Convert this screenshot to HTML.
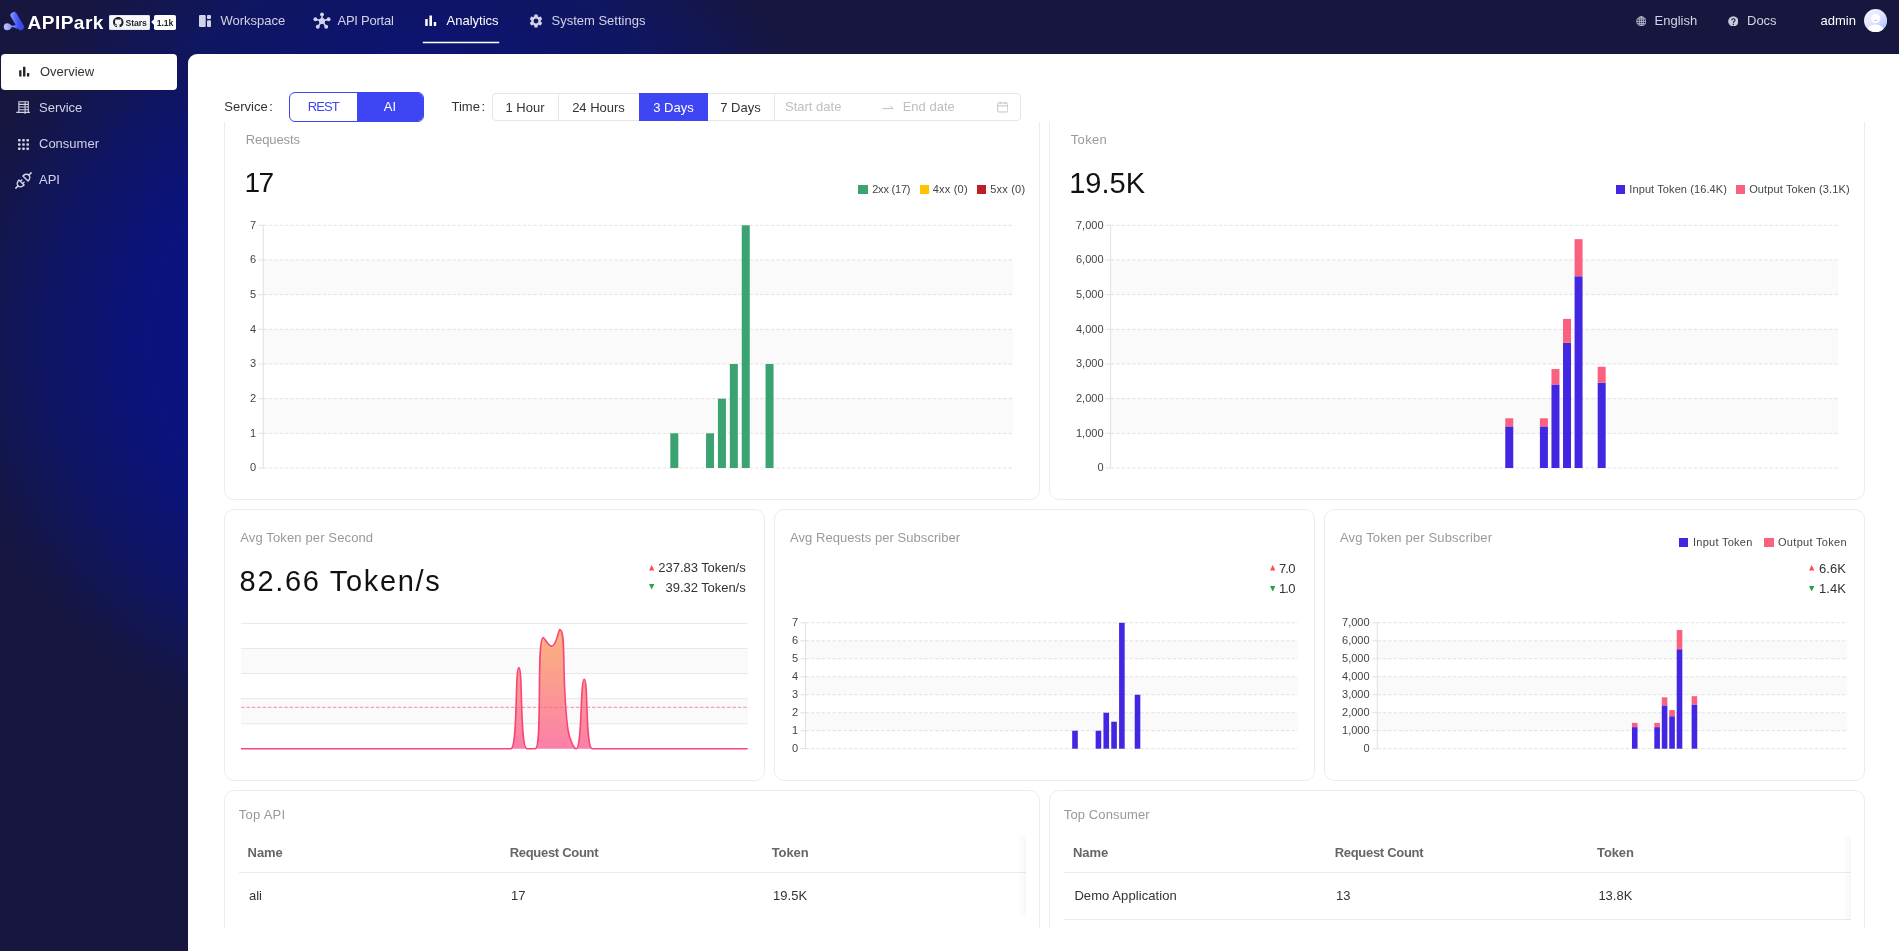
<!DOCTYPE html>
<html lang="en"><head><meta charset="utf-8"><title>APIPark - Analytics Overview</title>
<style>
*{box-sizing:border-box;margin:0;padding:0}
html,body{width:1899px;height:951px;overflow:hidden}
body{position:relative;font-family:"Liberation Sans", sans-serif;background:#17163f;
background-image:radial-gradient(520px 436px at 460px 340px,#0a1088 0,#0a1283 50%,#0b137a 63%,#0d146e 71%,#0f1562 80%,#121652 89%,#151645 96%,#17163f 102%);}
.abs,.t,.card{position:absolute}
.t{line-height:20px;white-space:nowrap}
.hdr{position:absolute;left:0;top:0;width:1899px;height:54px;will-change:transform;background:#17163f radial-gradient(circle 450px at 420px 300px,#0a1088 0,#0c1378 50%,#0d1470 56%,#0e1567 66%,#101660 76%,#121655 84%,#14164a 92%,#17163f 100%)}
.side{position:absolute;left:0;top:0;width:188px;height:951px;will-change:transform}
.main{position:absolute;left:0;top:0;width:1899px;height:951px;will-change:transform}
.main::before{content:"";position:absolute;left:188px;top:54px;width:1711px;height:897px;background:#fff;border-top-left-radius:9px}
.badge{background:linear-gradient(#fafbfc,#eff1f3);border-radius:1.8px;box-shadow:inset 0 0 0 .5px #d1d5da}
.bubble{background:#fff;border-radius:1.8px}
.seg{border:1px solid #3d46f2;border-radius:6px;overflow:hidden;background:#fff}
.segon{position:absolute;left:66.5px;top:0;right:0;bottom:0;background:#3d46f2}
.tg{border:1px solid #e6e6e6;border-radius:4px;background:#fff}
.clip{position:absolute;left:0;top:0;width:1899px;height:951px;clip-path:inset(122px 0 23.5px 188px)}
.card{border:1px solid #ececec;border-radius:10px;background:#fff}
</style></head>
<body>
<header class="hdr">
<svg class="abs" style="left:2px;top:10px" width="24" height="22" viewBox="0 0 24 22">
<defs><linearGradient id="lg1" gradientUnits="userSpaceOnUse" x1="2" y1="0" x2="22" y2="0"><stop offset="0" stop-color="#c3c5ff"/><stop offset="0.3" stop-color="#929dff"/><stop offset="0.52" stop-color="#6073fb"/><stop offset="0.75" stop-color="#3f4df2"/><stop offset="1" stop-color="#3540ee"/></linearGradient></defs>
<circle cx="5.3" cy="16.7" r="3.5" fill="url(#lg1)"/>
<path d="M7.6 14.2 C9.4 15 9.8 16 11.4 15.6 L14.5 14.6 L15.5 19 C12.8 18 10.8 16.6 9.6 17.6 C9 18.2 8.4 18.8 7.6 19.3 Z" fill="url(#lg1)"/>
<path d="M11.8 5.3 L18.7 16.9" stroke="url(#lg1)" stroke-width="6.6" stroke-linecap="round"/>
</svg>
<div class="t" style="top:13.12px;font-size:19px;color:#fff;font-weight:700;letter-spacing:0.5px;left:27.5px;">APIPark</div>
<div class="abs badge" style="left:109px;top:15px;width:41px;height:15px"></div>
<svg class="abs" style="left:113px;top:17px" width="10.5" height="10.5" viewBox="0 0 16 16"><path fill="#1b1f23" d="M8 0C3.58 0 0 3.58 0 8c0 3.54 2.29 6.53 5.47 7.59.4.07.55-.17.55-.38 0-.19-.01-.82-.01-1.49-2.01.37-2.53-.49-2.69-.94-.09-.23-.48-.94-.82-1.13-.28-.15-.68-.52-.01-.53.63-.01 1.08.58 1.23.82.72 1.21 1.87.87 2.33.66.07-.52.28-.87.51-1.07-1.78-.2-3.64-.89-3.64-3.95 0-.87.31-1.59.82-2.15-.08-.2-.36-1.02.08-2.12 0 0 .67-.21 2.2.82.64-.18 1.32-.27 2-.27.68 0 1.36.09 2 .27 1.53-1.04 2.2-.82 2.2-.82.44 1.1.16 1.92.08 2.12.51.56.82 1.27.82 2.15 0 3.07-1.87 3.75-3.65 3.95.29.25.54.73.54 1.48 0 1.07-.01 1.93-.01 2.2 0 .21.15.46.55.38A8.013 8.013 0 0016 8c0-4.42-3.58-8-8-8z"/></svg>
<div class="t" style="top:13.19px;font-size:8.7px;color:#24292e;font-weight:700;letter-spacing:-0.15px;left:125.6px;">Stars</div>
<div class="abs bubble" style="left:154px;top:15px;width:22px;height:15px"></div>
<div class="abs" style="left:152.2px;top:20.2px;width:4px;height:4px;background:#fff;transform:rotate(45deg)"></div>
<div class="t" style="top:13.19px;font-size:8.7px;color:#24292e;font-weight:700;letter-spacing:-0.1px;left:-35px;width:400px;text-align:center;">1.1k</div>
<svg class="abs" style="left:199px;top:15px" width="12" height="12" viewBox="0 0 12 12" fill="#d2d3e6">
<rect x="0" y="0" width="6.7" height="12" rx="1"/><rect x="8" y="0" width="4" height="4" rx=".9"/><rect x="8" y="5.3" width="4" height="6.7" rx=".9"/></svg>
<div class="t" style="top:10.50px;font-size:13px;color:#d2d3e6;left:220.5px;">Workspace</div>
<svg class="abs" style="left:313px;top:12px" width="18" height="18" viewBox="0 0 18 18" fill="#d2d3e6" stroke="#d2d3e6">
<g stroke-width="1.6"><line x1="9" y1="9" x2="9" y2="2.4"/><line x1="9" y1="9" x2="15.6" y2="7.2"/><line x1="9" y1="9" x2="13.2" y2="14.8"/><line x1="9" y1="9" x2="4.8" y2="14.8"/><line x1="9" y1="9" x2="2.4" y2="7.2"/></g>
<g stroke="none"><circle cx="9" cy="9" r="3.1"/><circle cx="9" cy="2.4" r="1.95"/><circle cx="15.6" cy="7.2" r="1.95"/><circle cx="13.2" cy="14.8" r="1.95"/><circle cx="4.8" cy="14.8" r="1.95"/><circle cx="2.4" cy="7.2" r="1.95"/></g></svg>
<div class="t" style="top:10.50px;font-size:13px;color:#d2d3e6;letter-spacing:-0.25px;left:337.5px;">API Portal</div>
<svg class="abs" style="left:425px;top:15px" width="12" height="11" viewBox="0 0 12 11" fill="#fff">
<rect x="0.2" y="4" width="2.5" height="7" rx=".4"/><rect x="4.4" y="0.4" width="2.6" height="10.6" rx=".4"/><rect x="8.7" y="7" width="2.5" height="4" rx=".4"/></svg>
<div class="t" style="top:10.50px;font-size:13px;color:#fff;left:446.5px;">Analytics</div>
<svg class="abs" style="left:420px;top:38px" width="84" height="8" viewBox="0 0 84 8"><line x1="2.8" y1="4.5" x2="79.2" y2="4.5" stroke="#fff" stroke-width="1.5"/></svg>
<svg class="abs" style="left:527.6px;top:12.6px" width="16" height="16" viewBox="0 0 24 24"><path fill="#d2d3e6" d="M19.14,12.94c0.04-0.3,0.06-0.61,0.06-0.94c0-0.32-0.02-0.64-0.07-0.94l2.03-1.58c0.18-0.14,0.23-0.41,0.12-0.61 l-1.92-3.32c-0.12-0.22-0.37-0.29-0.59-0.22l-2.39,0.96c-0.5-0.38-1.03-0.7-1.62-0.94L14.4,2.81c-0.04-0.24-0.24-0.41-0.48-0.41 h-3.84c-0.24,0-0.43,0.17-0.47,0.41L9.25,5.35C8.66,5.59,8.12,5.92,7.63,6.29L5.24,5.33c-0.22-0.08-0.47,0-0.59,0.22L2.74,8.87 C2.62,9.08,2.66,9.34,2.86,9.48l2.03,1.58C4.84,11.36,4.8,11.69,4.8,12s0.02,0.64,0.07,0.94l-2.03,1.58 c-0.18,0.14-0.23,0.41-0.12,0.61l1.92,3.32c0.12,0.22,0.37,0.29,0.59,0.22l2.39-0.96c0.5,0.38,1.03,0.7,1.62,0.94l0.36,2.54 c0.05,0.24,0.24,0.41,0.48,0.41h3.84c0.24,0,0.44-0.17,0.47-0.41l0.36-2.54c0.59-0.24,1.13-0.56,1.62-0.94l2.39,0.96 c0.22,0.08,0.47,0,0.59-0.22l1.92-3.32c0.12-0.22,0.07-0.47-0.12-0.61L19.14,12.94z M12,15.6c-1.98,0-3.6-1.62-3.6-3.6 s1.62-3.6,3.6-3.6s3.6,1.62,3.6,3.6S13.98,15.6,12,15.6z"/></svg>
<div class="t" style="top:10.50px;font-size:13px;color:#d2d3e6;left:551.5px;">System Settings</div>
<svg class="abs" style="left:1635.8px;top:15.8px" width="10.7" height="10.7" viewBox="0 0 12 12" fill="none" stroke="#bfc0d2" stroke-width="1">
<circle cx="6" cy="6" r="5.2"/><ellipse cx="6" cy="6" rx="2.3" ry="5.2"/><line x1="0.8" y1="6" x2="11.2" y2="6"/><line x1="6" y1="0.8" x2="6" y2="11.2"/><path d="M1.6 3.4 H10.4 M1.6 8.6 H10.4"/></svg>
<div class="t" style="top:10.50px;font-size:13px;color:#d2d3e6;left:1654.5px;">English</div>
<svg class="abs" style="left:1727.6px;top:15.8px" width="10.7" height="10.7" viewBox="0 0 12 12">
<circle cx="6" cy="6" r="5.8" fill="#c9cadb"/><path d="M4.2 4.7 C4.2 2.6 7.9 2.6 7.9 4.7 C7.9 6 6 6 6 7.5" fill="none" stroke="#17163f" stroke-width="1.25"/><circle cx="6" cy="9.3" r="0.8" fill="#17163f"/></svg>
<div class="t" style="top:10.50px;font-size:13px;color:#d2d3e6;left:1747px;">Docs</div>
<div class="t" style="top:10.50px;font-size:13px;color:#fff;left:1820.5px;">admin</div>
<svg class="abs" style="left:1863.9px;top:8.8px" width="23.2" height="23.2" viewBox="0 0 23 23">
<defs><linearGradient id="av" x1="0.15" y1="0.1" x2="0.85" y2="0.95"><stop offset="0" stop-color="#f6f2ff"/><stop offset="0.45" stop-color="#e4e3ff"/><stop offset="1" stop-color="#a9c2ff"/></linearGradient><clipPath id="avc"><circle cx="11.5" cy="11.5" r="11.5"/></clipPath></defs>
<circle cx="11.5" cy="11.5" r="11.5" fill="url(#av)"/>
<g clip-path="url(#avc)" fill="#fff"><circle cx="11.55" cy="9.4" r="4.55"/><ellipse cx="11.5" cy="22.6" rx="8.9" ry="7.2"/></g>
<rect x="10.2" y="11.1" width="2.8" height="0.85" rx="0.4" fill="#8fa4ff"/></svg>
</header>
<nav class="side">
<div class="abs" style="left:1px;top:54px;width:176px;height:36px;background:#fff;border-radius:4px"></div>
<svg class="abs" style="left:18.5px;top:66px" width="11" height="11" viewBox="0 0 12 11" fill="#222">
<rect x="0.2" y="4" width="2.5" height="7" rx=".3"/><rect x="4.4" y="0.2" width="2.6" height="10.8" rx=".3"/><rect x="8.7" y="7" width="2.5" height="4" rx=".3"/></svg>
<div class="t" style="top:62.00px;font-size:13px;color:#333;left:40px;">Overview</div>
<svg class="abs" style="left:15.8px;top:101.2px" width="14.2" height="14.2" viewBox="0 0 15 15" fill="none" stroke="#d2d3e6" stroke-width="1.15">
<path d="M3 0.8 H13 V12 H3 Z M3 3.6 H13 M3 6.4 H13 M3 9.2 H13 M9.6 0.8 V13.8 M0.3 12 H14.7"/></svg>
<div class="t" style="top:97.80px;font-size:13px;color:#d2d3e6;left:39px;">Service</div>
<svg class="abs" style="left:17.5px;top:138.5px" width="11" height="11" viewBox="0 0 11 11" fill="#d2d3e6"><rect x="0.0" y="0.0" width="2.6" height="2.6" rx=".8"/><rect x="4.2" y="0.0" width="2.6" height="2.6" rx=".8"/><rect x="8.4" y="0.0" width="2.6" height="2.6" rx=".8"/><rect x="0.0" y="4.2" width="2.6" height="2.6" rx=".8"/><rect x="4.2" y="4.2" width="2.6" height="2.6" rx=".8"/><rect x="8.4" y="4.2" width="2.6" height="2.6" rx=".8"/><rect x="0.0" y="8.4" width="2.6" height="2.6" rx=".8"/><rect x="4.2" y="8.4" width="2.6" height="2.6" rx=".8"/><rect x="8.4" y="8.4" width="2.6" height="2.6" rx=".8"/></svg>
<div class="t" style="top:133.90px;font-size:13px;color:#d2d3e6;left:39px;">Consumer</div>
<svg class="abs" style="left:14.5px;top:171.5px" width="17" height="17" viewBox="0 0 17 17" fill="none" stroke="#d2d3e6" stroke-width="1.45" stroke-linecap="round" stroke-linejoin="round">
<g transform="translate(8.5 8.5) rotate(-45)"><path d="M-10.8 0 H-7.6 M-2.8 -3.6 A4.8 3.6 0 0 0 -2.8 3.6 Z M-2.8 -1.6 H-0.8 M-2.8 1.6 H-0.8 M2.8 -3.6 A4.8 3.6 0 0 1 2.8 3.6 Z M7.6 0 H10.8"/></g></svg>
<div class="t" style="top:169.90px;font-size:13px;color:#d2d3e6;left:39px;">API</div>
</nav>
<main class="main">
<div class="t" style="top:96.50px;font-size:13px;color:#333;left:224.3px;">Service<span style="margin-left:1.5px">:</span></div>
<div class="abs seg" style="left:289px;top:92px;width:135px;height:30px"><div class="segon"></div></div>
<div class="t" style="top:97.20px;font-size:13px;color:#3d46f2;letter-spacing:-0.9px;left:123.30000000000001px;width:400px;text-align:center;">REST</div>
<div class="t" style="top:97.20px;font-size:13px;color:#fff;left:190px;width:400px;text-align:center;">AI</div>
<div class="t" style="top:96.50px;font-size:13px;color:#333;left:451.5px;">Time<span style="margin-left:1.5px">:</span></div>
<div class="abs tg" style="left:492px;top:93px;width:529px;height:28px"></div>
<div class="abs" style="left:558px;top:94px;width:1px;height:26px;background:#e6e6e6"></div>
<div class="abs" style="left:774px;top:94px;width:1px;height:26px;background:#e6e6e6"></div>
<div class="abs" style="left:639px;top:93px;width:69px;height:28px;background:#3d46f2"></div>
<div class="t" style="top:97.50px;font-size:13px;color:#333;left:325px;width:400px;text-align:center;">1 Hour</div>
<div class="t" style="top:97.50px;font-size:13px;color:#333;left:398.5px;width:400px;text-align:center;">24 Hours</div>
<div class="t" style="top:97.50px;font-size:13px;color:#fff;left:473.5px;width:400px;text-align:center;">3 Days</div>
<div class="t" style="top:97.50px;font-size:13px;color:#333;left:540.5px;width:400px;text-align:center;">7 Days</div>
<div class="t" style="top:96.50px;font-size:13px;color:#bfbfbf;left:785px;">Start date</div>
<div class="t" style="top:96.50px;font-size:13px;color:#bfbfbf;left:902.7px;">End date</div>
<svg class="abs" style="left:882px;top:103px" width="12" height="8" viewBox="0 0 12 8" fill="none" stroke="#bfbfbf" stroke-width="1"><path d="M0.6 5.6 H11 L8 2.6"/></svg>
<svg class="abs" style="left:996.5px;top:101px" width="11.5" height="12" viewBox="0 0 12 12" fill="none" stroke="#bfbfbf" stroke-width="1"><rect x="0.7" y="1.8" width="10.6" height="9.4" rx="1"/><path d="M0.7 4.8 H11.3 M3.4 0.4 V3 M8.6 0.4 V3"/></svg>
<div class="clip">
<div class="card" style="left:224px;top:100px;width:816px;height:400px"></div>
<div class="card" style="left:1049px;top:100px;width:816px;height:400px"></div>
<div class="card" style="left:224px;top:509px;width:541px;height:272px"></div>
<div class="card" style="left:774px;top:509px;width:541px;height:272px"></div>
<div class="card" style="left:1324px;top:509px;width:541px;height:272px"></div>
<div class="card" style="left:224px;top:790px;width:816px;height:300px"></div>
<div class="card" style="left:1049px;top:790px;width:816px;height:300px"></div>
<div class="t" style="top:129.50px;font-size:13px;color:#999;letter-spacing:-0.1px;left:245.8px;">Requests</div>
<div class="t" style="top:172.90px;font-size:28px;color:#111;letter-spacing:-1.6px;left:244.6px;">17</div>
<div class="t" style="top:129.50px;font-size:13px;color:#999;letter-spacing:0.3px;left:1070.8px;">Token</div>
<div class="t" style="top:172.75px;font-size:29px;color:#111;left:1069.2px;">19.5K</div>
<div class="abs" style="left:858.4px;top:185.2px;width:9.2px;height:9.2px;background:#3ba272"></div>
<div class="t" style="top:178.89px;font-size:11px;color:#444;letter-spacing:-0.2px;left:872.2px;">2xx (17)</div>
<div class="abs" style="left:919.5px;top:185.2px;width:9.2px;height:9.2px;background:#ffc300"></div>
<div class="t" style="top:178.89px;font-size:11px;color:#444;letter-spacing:0.22px;left:932.7px;">4xx (0)</div>
<div class="abs" style="left:976.8px;top:185.2px;width:9.2px;height:9.2px;background:#bb2124"></div>
<div class="t" style="top:178.89px;font-size:11px;color:#444;letter-spacing:0.22px;left:990.2px;">5xx (0)</div>
<div class="abs" style="left:1615.8px;top:185.2px;width:9.2px;height:9.2px;background:#4127e1"></div>
<div class="t" style="top:178.89px;font-size:11px;color:#444;letter-spacing:0.1px;left:1629.3px;">Input Token (16.4K)</div>
<div class="abs" style="left:1735.6px;top:185.2px;width:9.2px;height:9.2px;background:#fa617f"></div>
<div class="t" style="top:178.89px;font-size:11px;color:#444;letter-spacing:0.12px;left:1749.2px;">Output Token (3.1K)</div>
<div class="t" style="top:527.50px;font-size:13px;color:#999;letter-spacing:0.13px;left:240.3px;">Avg Token per Second</div>
<div class="t" style="top:570.95px;font-size:29px;color:#111;letter-spacing:1.68px;left:239.6px;">82.66 Token/s</div>
<div class="t" style="top:527.50px;font-size:13px;color:#999;letter-spacing:0.05px;left:790px;">Avg Requests per Subscriber</div>
<div class="t" style="top:527.50px;font-size:13px;color:#999;letter-spacing:0.16px;left:1340px;">Avg Token per Subscriber</div>
<svg class="abs" style="left:648.7px;top:565.4px" width="5.4" height="5.6" viewBox="0 0 54 56"><path d="M27 0 L54 56 H0 Z" fill="#ff4d4f"/></svg>
<div class="t" style="top:557.50px;font-size:13px;color:#333;letter-spacing:-0.05px;right:1153.4px;">237.83 Token/s</div>
<svg class="abs" style="left:648.7px;top:584.3px" width="5.4" height="5.6" viewBox="0 0 54 56"><path d="M0 0 H54 L27 56 Z" fill="#22a93c"/></svg>
<div class="t" style="top:577.50px;font-size:13px;color:#333;letter-spacing:-0.05px;right:1153.4px;">39.32 Token/s</div>
<svg class="abs" style="left:1269.6px;top:565.4px" width="5.4" height="5.6" viewBox="0 0 54 56"><path d="M27 0 L54 56 H0 Z" fill="#ff4d4f"/></svg>
<div class="t" style="top:558.70px;font-size:13px;color:#333;letter-spacing:-0.8px;right:604.4000000000001px;">7.0</div>
<svg class="abs" style="left:1269.6px;top:585.6px" width="5.4" height="5.6" viewBox="0 0 54 56"><path d="M0 0 H54 L27 56 Z" fill="#22a93c"/></svg>
<div class="t" style="top:578.70px;font-size:13px;color:#333;letter-spacing:-0.8px;right:604.4000000000001px;">1.0</div>
<svg class="abs" style="left:1809.4px;top:565.4px" width="5.4" height="5.6" viewBox="0 0 54 56"><path d="M27 0 L54 56 H0 Z" fill="#ff4d4f"/></svg>
<div class="t" style="top:558.70px;font-size:13px;color:#333;right:53.200000000000045px;">6.6K</div>
<svg class="abs" style="left:1809.4px;top:585.6px" width="5.4" height="5.6" viewBox="0 0 54 56"><path d="M0 0 H54 L27 56 Z" fill="#22a93c"/></svg>
<div class="t" style="top:578.70px;font-size:13px;color:#333;right:53.200000000000045px;">1.4K</div>
<div class="abs" style="left:1679px;top:538px;width:9.3px;height:9.3px;background:#4127e1"></div>
<div class="t" style="top:531.99px;font-size:11px;color:#444;letter-spacing:0.27px;left:1693px;">Input Token</div>
<div class="abs" style="left:1764.4px;top:538px;width:9.3px;height:9.3px;background:#fa617f"></div>
<div class="t" style="top:531.99px;font-size:11px;color:#444;letter-spacing:0.3px;left:1778px;">Output Token</div>
<svg class="abs" style="left:0;top:0" width="1899" height="951" viewBox="0 0 1899 951" font-family='"Liberation Sans", sans-serif'><rect x="263.3" y="398.66" width="750" height="34.67" fill="#fafafa"/>
<rect x="263.3" y="329.31" width="750" height="34.67" fill="#fafafa"/>
<rect x="263.3" y="259.97" width="750" height="34.67" fill="#fafafa"/>
<line x1="263.3" y1="468" x2="1013.3" y2="468" stroke="#e3e3e3" stroke-width="1" stroke-dasharray="3.6 1.8"/>
<line x1="258.5" y1="468" x2="263.3" y2="468" stroke="#e0e0e0" stroke-width="1"/>
<text x="256" y="471.4" text-anchor="end" font-size="11" fill="#444">0</text>
<line x1="263.3" y1="433.33" x2="1013.3" y2="433.33" stroke="#e3e3e3" stroke-width="1" stroke-dasharray="3.6 1.8"/>
<line x1="258.5" y1="433.33" x2="263.3" y2="433.33" stroke="#e0e0e0" stroke-width="1"/>
<text x="256" y="436.73" text-anchor="end" font-size="11" fill="#444">1</text>
<line x1="263.3" y1="398.66" x2="1013.3" y2="398.66" stroke="#e3e3e3" stroke-width="1" stroke-dasharray="3.6 1.8"/>
<line x1="258.5" y1="398.66" x2="263.3" y2="398.66" stroke="#e0e0e0" stroke-width="1"/>
<text x="256" y="402.06" text-anchor="end" font-size="11" fill="#444">2</text>
<line x1="263.3" y1="363.99" x2="1013.3" y2="363.99" stroke="#e3e3e3" stroke-width="1" stroke-dasharray="3.6 1.8"/>
<line x1="258.5" y1="363.99" x2="263.3" y2="363.99" stroke="#e0e0e0" stroke-width="1"/>
<text x="256" y="367.39" text-anchor="end" font-size="11" fill="#444">3</text>
<line x1="263.3" y1="329.31" x2="1013.3" y2="329.31" stroke="#e3e3e3" stroke-width="1" stroke-dasharray="3.6 1.8"/>
<line x1="258.5" y1="329.31" x2="263.3" y2="329.31" stroke="#e0e0e0" stroke-width="1"/>
<text x="256" y="332.71" text-anchor="end" font-size="11" fill="#444">4</text>
<line x1="263.3" y1="294.64" x2="1013.3" y2="294.64" stroke="#e3e3e3" stroke-width="1" stroke-dasharray="3.6 1.8"/>
<line x1="258.5" y1="294.64" x2="263.3" y2="294.64" stroke="#e0e0e0" stroke-width="1"/>
<text x="256" y="298.04" text-anchor="end" font-size="11" fill="#444">5</text>
<line x1="263.3" y1="259.97" x2="1013.3" y2="259.97" stroke="#e3e3e3" stroke-width="1" stroke-dasharray="3.6 1.8"/>
<line x1="258.5" y1="259.97" x2="263.3" y2="259.97" stroke="#e0e0e0" stroke-width="1"/>
<text x="256" y="263.37" text-anchor="end" font-size="11" fill="#444">6</text>
<line x1="263.3" y1="225.3" x2="1013.3" y2="225.3" stroke="#e3e3e3" stroke-width="1" stroke-dasharray="3.6 1.8"/>
<line x1="258.5" y1="225.3" x2="263.3" y2="225.3" stroke="#e0e0e0" stroke-width="1"/>
<text x="256" y="228.7" text-anchor="end" font-size="11" fill="#444">7</text>
<line x1="263.3" y1="225.3" x2="263.3" y2="468" stroke="#e0e0e0" stroke-width="1"/>
<rect x="670.31" y="433.33" width="8" height="34.67" fill="#3ba272"/>
<rect x="706.03" y="433.33" width="8" height="34.67" fill="#3ba272"/>
<rect x="717.93" y="398.66" width="8" height="69.34" fill="#3ba272"/>
<rect x="729.84" y="363.99" width="8" height="104.01" fill="#3ba272"/>
<rect x="741.74" y="225.3" width="8" height="242.7" fill="#3ba272"/>
<rect x="765.55" y="363.99" width="8" height="104.01" fill="#3ba272"/>
<rect x="1110.6" y="398.66" width="727.8" height="34.67" fill="#fafafa"/>
<rect x="1110.6" y="329.31" width="727.8" height="34.67" fill="#fafafa"/>
<rect x="1110.6" y="259.97" width="727.8" height="34.67" fill="#fafafa"/>
<line x1="1110.6" y1="468" x2="1838.4" y2="468" stroke="#e3e3e3" stroke-width="1" stroke-dasharray="3.6 1.8"/>
<line x1="1105.6" y1="468" x2="1110.6" y2="468" stroke="#e0e0e0" stroke-width="1"/>
<text x="1103.5" y="471.4" text-anchor="end" font-size="11" fill="#444">0</text>
<line x1="1110.6" y1="433.33" x2="1838.4" y2="433.33" stroke="#e3e3e3" stroke-width="1" stroke-dasharray="3.6 1.8"/>
<line x1="1105.6" y1="433.33" x2="1110.6" y2="433.33" stroke="#e0e0e0" stroke-width="1"/>
<text x="1103.5" y="436.73" text-anchor="end" font-size="11" fill="#444">1,000</text>
<line x1="1110.6" y1="398.66" x2="1838.4" y2="398.66" stroke="#e3e3e3" stroke-width="1" stroke-dasharray="3.6 1.8"/>
<line x1="1105.6" y1="398.66" x2="1110.6" y2="398.66" stroke="#e0e0e0" stroke-width="1"/>
<text x="1103.5" y="402.06" text-anchor="end" font-size="11" fill="#444">2,000</text>
<line x1="1110.6" y1="363.99" x2="1838.4" y2="363.99" stroke="#e3e3e3" stroke-width="1" stroke-dasharray="3.6 1.8"/>
<line x1="1105.6" y1="363.99" x2="1110.6" y2="363.99" stroke="#e0e0e0" stroke-width="1"/>
<text x="1103.5" y="367.39" text-anchor="end" font-size="11" fill="#444">3,000</text>
<line x1="1110.6" y1="329.31" x2="1838.4" y2="329.31" stroke="#e3e3e3" stroke-width="1" stroke-dasharray="3.6 1.8"/>
<line x1="1105.6" y1="329.31" x2="1110.6" y2="329.31" stroke="#e0e0e0" stroke-width="1"/>
<text x="1103.5" y="332.71" text-anchor="end" font-size="11" fill="#444">4,000</text>
<line x1="1110.6" y1="294.64" x2="1838.4" y2="294.64" stroke="#e3e3e3" stroke-width="1" stroke-dasharray="3.6 1.8"/>
<line x1="1105.6" y1="294.64" x2="1110.6" y2="294.64" stroke="#e0e0e0" stroke-width="1"/>
<text x="1103.5" y="298.04" text-anchor="end" font-size="11" fill="#444">5,000</text>
<line x1="1110.6" y1="259.97" x2="1838.4" y2="259.97" stroke="#e3e3e3" stroke-width="1" stroke-dasharray="3.6 1.8"/>
<line x1="1105.6" y1="259.97" x2="1110.6" y2="259.97" stroke="#e0e0e0" stroke-width="1"/>
<text x="1103.5" y="263.37" text-anchor="end" font-size="11" fill="#444">6,000</text>
<line x1="1110.6" y1="225.3" x2="1838.4" y2="225.3" stroke="#e3e3e3" stroke-width="1" stroke-dasharray="3.6 1.8"/>
<line x1="1105.6" y1="225.3" x2="1110.6" y2="225.3" stroke="#e0e0e0" stroke-width="1"/>
<text x="1103.5" y="228.7" text-anchor="end" font-size="11" fill="#444">7,000</text>
<line x1="1110.6" y1="225.3" x2="1110.6" y2="468" stroke="#e0e0e0" stroke-width="1"/>
<rect x="1505.26" y="426.39" width="8" height="41.61" fill="#4127e1"/>
<rect x="1539.91" y="426.39" width="8" height="41.61" fill="#4127e1"/>
<rect x="1551.47" y="384.44" width="8" height="83.56" fill="#4127e1"/>
<rect x="1563.02" y="342.84" width="8" height="125.16" fill="#4127e1"/>
<rect x="1574.57" y="276.27" width="8" height="191.73" fill="#4127e1"/>
<rect x="1597.68" y="382.71" width="8" height="85.29" fill="#4127e1"/>
<rect x="1505.26" y="418.28" width="8" height="8.11" fill="#fa617f"/>
<rect x="1539.91" y="418.28" width="8" height="8.11" fill="#fa617f"/>
<rect x="1551.47" y="369.01" width="8" height="15.43" fill="#fa617f"/>
<rect x="1563.02" y="318.91" width="8" height="23.92" fill="#fa617f"/>
<rect x="1574.57" y="239.17" width="8" height="37.1" fill="#fa617f"/>
<rect x="1597.68" y="366.76" width="8" height="15.95" fill="#fa617f"/>
<rect x="805.4" y="712.73" width="492.3" height="17.99" fill="#fafafa"/>
<rect x="805.4" y="676.76" width="492.3" height="17.99" fill="#fafafa"/>
<rect x="805.4" y="640.79" width="492.3" height="17.99" fill="#fafafa"/>
<line x1="805.4" y1="748.7" x2="1297.7" y2="748.7" stroke="#e3e3e3" stroke-width="1" stroke-dasharray="3.6 1.8"/>
<line x1="800.5" y1="748.7" x2="805.4" y2="748.7" stroke="#e0e0e0" stroke-width="1"/>
<text x="798" y="752.1" text-anchor="end" font-size="11" fill="#444">0</text>
<line x1="805.4" y1="730.71" x2="1297.7" y2="730.71" stroke="#e3e3e3" stroke-width="1" stroke-dasharray="3.6 1.8"/>
<line x1="800.5" y1="730.71" x2="805.4" y2="730.71" stroke="#e0e0e0" stroke-width="1"/>
<text x="798" y="734.11" text-anchor="end" font-size="11" fill="#444">1</text>
<line x1="805.4" y1="712.73" x2="1297.7" y2="712.73" stroke="#e3e3e3" stroke-width="1" stroke-dasharray="3.6 1.8"/>
<line x1="800.5" y1="712.73" x2="805.4" y2="712.73" stroke="#e0e0e0" stroke-width="1"/>
<text x="798" y="716.13" text-anchor="end" font-size="11" fill="#444">2</text>
<line x1="805.4" y1="694.74" x2="1297.7" y2="694.74" stroke="#e3e3e3" stroke-width="1" stroke-dasharray="3.6 1.8"/>
<line x1="800.5" y1="694.74" x2="805.4" y2="694.74" stroke="#e0e0e0" stroke-width="1"/>
<text x="798" y="698.14" text-anchor="end" font-size="11" fill="#444">3</text>
<line x1="805.4" y1="676.76" x2="1297.7" y2="676.76" stroke="#e3e3e3" stroke-width="1" stroke-dasharray="3.6 1.8"/>
<line x1="800.5" y1="676.76" x2="805.4" y2="676.76" stroke="#e0e0e0" stroke-width="1"/>
<text x="798" y="680.16" text-anchor="end" font-size="11" fill="#444">4</text>
<line x1="805.4" y1="658.77" x2="1297.7" y2="658.77" stroke="#e3e3e3" stroke-width="1" stroke-dasharray="3.6 1.8"/>
<line x1="800.5" y1="658.77" x2="805.4" y2="658.77" stroke="#e0e0e0" stroke-width="1"/>
<text x="798" y="662.17" text-anchor="end" font-size="11" fill="#444">5</text>
<line x1="805.4" y1="640.79" x2="1297.7" y2="640.79" stroke="#e3e3e3" stroke-width="1" stroke-dasharray="3.6 1.8"/>
<line x1="800.5" y1="640.79" x2="805.4" y2="640.79" stroke="#e0e0e0" stroke-width="1"/>
<text x="798" y="644.19" text-anchor="end" font-size="11" fill="#444">6</text>
<line x1="805.4" y1="622.8" x2="1297.7" y2="622.8" stroke="#e3e3e3" stroke-width="1" stroke-dasharray="3.6 1.8"/>
<line x1="800.5" y1="622.8" x2="805.4" y2="622.8" stroke="#e0e0e0" stroke-width="1"/>
<text x="798" y="626.2" text-anchor="end" font-size="11" fill="#444">7</text>
<line x1="805.4" y1="622.8" x2="805.4" y2="748.7" stroke="#e0e0e0" stroke-width="1"/>
<rect x="1072.19" y="730.71" width="5.6" height="17.99" fill="#4127e1"/>
<rect x="1095.64" y="730.71" width="5.6" height="17.99" fill="#4127e1"/>
<rect x="1103.45" y="712.73" width="5.6" height="35.97" fill="#4127e1"/>
<rect x="1111.26" y="721.72" width="5.6" height="26.98" fill="#4127e1"/>
<rect x="1119.08" y="622.8" width="5.6" height="125.9" fill="#4127e1"/>
<rect x="1134.71" y="694.74" width="5.6" height="53.96" fill="#4127e1"/>
<rect x="1377.3" y="712.73" width="470.1" height="17.99" fill="#fafafa"/>
<rect x="1377.3" y="676.76" width="470.1" height="17.99" fill="#fafafa"/>
<rect x="1377.3" y="640.79" width="470.1" height="17.99" fill="#fafafa"/>
<line x1="1377.3" y1="748.7" x2="1847.4" y2="748.7" stroke="#e3e3e3" stroke-width="1" stroke-dasharray="3.6 1.8"/>
<line x1="1372.4" y1="748.7" x2="1377.3" y2="748.7" stroke="#e0e0e0" stroke-width="1"/>
<text x="1369.6" y="752.1" text-anchor="end" font-size="11" fill="#444">0</text>
<line x1="1377.3" y1="730.71" x2="1847.4" y2="730.71" stroke="#e3e3e3" stroke-width="1" stroke-dasharray="3.6 1.8"/>
<line x1="1372.4" y1="730.71" x2="1377.3" y2="730.71" stroke="#e0e0e0" stroke-width="1"/>
<text x="1369.6" y="734.11" text-anchor="end" font-size="11" fill="#444">1,000</text>
<line x1="1377.3" y1="712.73" x2="1847.4" y2="712.73" stroke="#e3e3e3" stroke-width="1" stroke-dasharray="3.6 1.8"/>
<line x1="1372.4" y1="712.73" x2="1377.3" y2="712.73" stroke="#e0e0e0" stroke-width="1"/>
<text x="1369.6" y="716.13" text-anchor="end" font-size="11" fill="#444">2,000</text>
<line x1="1377.3" y1="694.74" x2="1847.4" y2="694.74" stroke="#e3e3e3" stroke-width="1" stroke-dasharray="3.6 1.8"/>
<line x1="1372.4" y1="694.74" x2="1377.3" y2="694.74" stroke="#e0e0e0" stroke-width="1"/>
<text x="1369.6" y="698.14" text-anchor="end" font-size="11" fill="#444">3,000</text>
<line x1="1377.3" y1="676.76" x2="1847.4" y2="676.76" stroke="#e3e3e3" stroke-width="1" stroke-dasharray="3.6 1.8"/>
<line x1="1372.4" y1="676.76" x2="1377.3" y2="676.76" stroke="#e0e0e0" stroke-width="1"/>
<text x="1369.6" y="680.16" text-anchor="end" font-size="11" fill="#444">4,000</text>
<line x1="1377.3" y1="658.77" x2="1847.4" y2="658.77" stroke="#e3e3e3" stroke-width="1" stroke-dasharray="3.6 1.8"/>
<line x1="1372.4" y1="658.77" x2="1377.3" y2="658.77" stroke="#e0e0e0" stroke-width="1"/>
<text x="1369.6" y="662.17" text-anchor="end" font-size="11" fill="#444">5,000</text>
<line x1="1377.3" y1="640.79" x2="1847.4" y2="640.79" stroke="#e3e3e3" stroke-width="1" stroke-dasharray="3.6 1.8"/>
<line x1="1372.4" y1="640.79" x2="1377.3" y2="640.79" stroke="#e0e0e0" stroke-width="1"/>
<text x="1369.6" y="644.19" text-anchor="end" font-size="11" fill="#444">6,000</text>
<line x1="1377.3" y1="622.8" x2="1847.4" y2="622.8" stroke="#e3e3e3" stroke-width="1" stroke-dasharray="3.6 1.8"/>
<line x1="1372.4" y1="622.8" x2="1377.3" y2="622.8" stroke="#e0e0e0" stroke-width="1"/>
<text x="1369.6" y="626.2" text-anchor="end" font-size="11" fill="#444">7,000</text>
<line x1="1377.3" y1="622.8" x2="1377.3" y2="748.7" stroke="#e0e0e0" stroke-width="1"/>
<rect x="1631.94" y="727.12" width="5.6" height="21.58" fill="#4127e1"/>
<rect x="1654.32" y="727.12" width="5.6" height="21.58" fill="#4127e1"/>
<rect x="1661.78" y="705.35" width="5.6" height="43.35" fill="#4127e1"/>
<rect x="1669.25" y="716.24" width="5.6" height="32.46" fill="#4127e1"/>
<rect x="1676.71" y="649.24" width="5.6" height="99.46" fill="#4127e1"/>
<rect x="1691.63" y="704.46" width="5.6" height="44.24" fill="#4127e1"/>
<rect x="1631.94" y="722.91" width="5.6" height="4.21" fill="#fa617f"/>
<rect x="1654.32" y="722.91" width="5.6" height="4.21" fill="#fa617f"/>
<rect x="1661.78" y="697.35" width="5.6" height="8" fill="#fa617f"/>
<rect x="1669.25" y="710.03" width="5.6" height="6.21" fill="#fa617f"/>
<rect x="1676.71" y="629.99" width="5.6" height="19.24" fill="#fa617f"/>
<rect x="1691.63" y="696.18" width="5.6" height="8.27" fill="#fa617f"/>
<rect x="241" y="648.48" width="506.7" height="25.08" fill="#fafafa"/>
<rect x="241" y="698.64" width="506.7" height="25.08" fill="#fafafa"/>
<line x1="241" y1="623.4" x2="747.7" y2="623.4" stroke="#e8e8e8" stroke-width="1"/>
<line x1="241" y1="648.48" x2="747.7" y2="648.48" stroke="#e8e8e8" stroke-width="1"/>
<line x1="241" y1="673.56" x2="747.7" y2="673.56" stroke="#e8e8e8" stroke-width="1"/>
<line x1="241" y1="698.64" x2="747.7" y2="698.64" stroke="#e8e8e8" stroke-width="1"/>
<line x1="241" y1="723.72" x2="747.7" y2="723.72" stroke="#e8e8e8" stroke-width="1"/>
<defs><linearGradient id="ag" x1="0" y1="0" x2="0" y2="1"><stop offset="0" stop-color="#fbb47c"/><stop offset="1" stop-color="#fb7fa8"/></linearGradient></defs>
<path d="M241 748.8 C241 748.8 245.09 748.8 249.17 748.8 C253.26 748.8 253.26 748.8 257.35 748.8 C261.43 748.8 261.43 748.8 265.52 748.8 C269.6 748.8 269.6 748.8 273.69 748.8 C277.78 748.8 277.78 748.8 281.86 748.8 C285.95 748.8 285.95 748.8 290.04 748.8 C294.12 748.8 294.12 748.8 298.21 748.8 C302.29 748.8 302.29 748.8 306.38 748.8 C310.47 748.8 310.47 748.8 314.55 748.8 C318.64 748.8 318.64 748.8 322.73 748.8 C326.81 748.8 326.81 748.8 330.9 748.8 C334.98 748.8 334.98 748.8 339.07 748.8 C343.16 748.8 343.16 748.8 347.24 748.8 C351.33 748.8 351.33 748.8 355.42 748.8 C359.5 748.8 359.5 748.8 363.59 748.8 C367.68 748.8 367.68 748.8 371.76 748.8 C375.85 748.8 375.85 748.8 379.93 748.8 C384.02 748.8 384.02 748.8 388.11 748.8 C392.19 748.8 392.19 748.8 396.28 748.8 C400.37 748.8 400.37 748.8 404.45 748.8 C408.54 748.8 408.54 748.8 412.62 748.8 C416.71 748.8 416.71 748.8 420.8 748.8 C424.88 748.8 424.88 748.8 428.97 748.8 C433.06 748.8 433.06 748.8 437.14 748.8 C441.23 748.8 441.23 748.8 445.31 748.8 C449.4 748.8 449.4 748.8 453.49 748.8 C457.57 748.8 457.57 748.8 461.66 748.8 C465.75 748.8 465.75 748.8 469.83 748.8 C473.92 748.8 473.92 748.8 478 748.8 C482.09 748.8 482.09 748.8 486.18 748.8 C490.26 748.8 490.26 748.8 494.35 748.8 C498.44 748.8 498.44 748.8 502.52 748.8 C506.61 748.8 509.95 748.8 510.7 748.8 C518.12 748.8 514.78 667.59 518.87 667.59 C522.95 667.59 519.61 748.8 527.04 748.8 C527.78 748.8 534.66 748.8 535.21 748.8 C542.83 748.8 536 637.49 543.39 637.49 C544.17 637.49 548.36 646.12 551.56 646.12 C556.54 646.12 558.45 629.5 559.73 629.5 C566.63 629.5 561.17 679.93 567.9 729.08 C569.34 739.58 574.17 748.8 576.08 748.8 C582.34 748.8 580.16 679.18 584.25 679.18 C588.33 679.18 585.1 748.8 592.42 748.8 C593.27 748.8 596.51 748.8 600.59 748.8 C604.68 748.8 604.68 748.8 608.77 748.8 C612.85 748.8 612.85 748.8 616.94 748.8 C621.03 748.8 621.03 748.8 625.11 748.8 C629.2 748.8 629.2 748.8 633.28 748.8 C637.37 748.8 637.37 748.8 641.46 748.8 C645.54 748.8 645.54 748.8 649.63 748.8 C653.72 748.8 653.72 748.8 657.8 748.8 C661.89 748.8 661.89 748.8 665.97 748.8 C670.06 748.8 670.06 748.8 674.15 748.8 C678.23 748.8 678.23 748.8 682.32 748.8 C686.41 748.8 686.41 748.8 690.49 748.8 C694.58 748.8 694.58 748.8 698.66 748.8 C702.75 748.8 702.75 748.8 706.84 748.8 C710.92 748.8 710.92 748.8 715.01 748.8 C719.1 748.8 719.1 748.8 723.18 748.8 C727.27 748.8 727.27 748.8 731.35 748.8 C735.44 748.8 735.44 748.8 739.53 748.8 C743.61 748.8 747.7 748.8 747.7 748.8 L747.7 748.8 L241 748.8 Z" fill="url(#ag)"/>
<line x1="241" y1="707.34" x2="747.7" y2="707.34" stroke="#f7649a" stroke-width="1" stroke-dasharray="3.6 1.8" opacity="0.75"/>
<path d="M241 748.8 C241 748.8 245.09 748.8 249.17 748.8 C253.26 748.8 253.26 748.8 257.35 748.8 C261.43 748.8 261.43 748.8 265.52 748.8 C269.6 748.8 269.6 748.8 273.69 748.8 C277.78 748.8 277.78 748.8 281.86 748.8 C285.95 748.8 285.95 748.8 290.04 748.8 C294.12 748.8 294.12 748.8 298.21 748.8 C302.29 748.8 302.29 748.8 306.38 748.8 C310.47 748.8 310.47 748.8 314.55 748.8 C318.64 748.8 318.64 748.8 322.73 748.8 C326.81 748.8 326.81 748.8 330.9 748.8 C334.98 748.8 334.98 748.8 339.07 748.8 C343.16 748.8 343.16 748.8 347.24 748.8 C351.33 748.8 351.33 748.8 355.42 748.8 C359.5 748.8 359.5 748.8 363.59 748.8 C367.68 748.8 367.68 748.8 371.76 748.8 C375.85 748.8 375.85 748.8 379.93 748.8 C384.02 748.8 384.02 748.8 388.11 748.8 C392.19 748.8 392.19 748.8 396.28 748.8 C400.37 748.8 400.37 748.8 404.45 748.8 C408.54 748.8 408.54 748.8 412.62 748.8 C416.71 748.8 416.71 748.8 420.8 748.8 C424.88 748.8 424.88 748.8 428.97 748.8 C433.06 748.8 433.06 748.8 437.14 748.8 C441.23 748.8 441.23 748.8 445.31 748.8 C449.4 748.8 449.4 748.8 453.49 748.8 C457.57 748.8 457.57 748.8 461.66 748.8 C465.75 748.8 465.75 748.8 469.83 748.8 C473.92 748.8 473.92 748.8 478 748.8 C482.09 748.8 482.09 748.8 486.18 748.8 C490.26 748.8 490.26 748.8 494.35 748.8 C498.44 748.8 498.44 748.8 502.52 748.8 C506.61 748.8 509.95 748.8 510.7 748.8 C518.12 748.8 514.78 667.59 518.87 667.59 C522.95 667.59 519.61 748.8 527.04 748.8 C527.78 748.8 534.66 748.8 535.21 748.8 C542.83 748.8 536 637.49 543.39 637.49 C544.17 637.49 548.36 646.12 551.56 646.12 C556.54 646.12 558.45 629.5 559.73 629.5 C566.63 629.5 561.17 679.93 567.9 729.08 C569.34 739.58 574.17 748.8 576.08 748.8 C582.34 748.8 580.16 679.18 584.25 679.18 C588.33 679.18 585.1 748.8 592.42 748.8 C593.27 748.8 596.51 748.8 600.59 748.8 C604.68 748.8 604.68 748.8 608.77 748.8 C612.85 748.8 612.85 748.8 616.94 748.8 C621.03 748.8 621.03 748.8 625.11 748.8 C629.2 748.8 629.2 748.8 633.28 748.8 C637.37 748.8 637.37 748.8 641.46 748.8 C645.54 748.8 645.54 748.8 649.63 748.8 C653.72 748.8 653.72 748.8 657.8 748.8 C661.89 748.8 661.89 748.8 665.97 748.8 C670.06 748.8 670.06 748.8 674.15 748.8 C678.23 748.8 678.23 748.8 682.32 748.8 C686.41 748.8 686.41 748.8 690.49 748.8 C694.58 748.8 694.58 748.8 698.66 748.8 C702.75 748.8 702.75 748.8 706.84 748.8 C710.92 748.8 710.92 748.8 715.01 748.8 C719.1 748.8 719.1 748.8 723.18 748.8 C727.27 748.8 727.27 748.8 731.35 748.8 C735.44 748.8 735.44 748.8 739.53 748.8 C743.61 748.8 747.7 748.8 747.7 748.8" fill="none" stroke="#f8457a" stroke-width="1.6" stroke-linejoin="round"/></svg>
<div class="t" style="top:804.50px;font-size:13px;color:#999;letter-spacing:0.25px;left:238.8px;">Top API</div>
<div class="t" style="top:804.50px;font-size:13px;color:#999;letter-spacing:0.12px;left:1063.8px;">Top Consumer</div>
<div class="t" style="top:842.60px;font-size:13px;color:#666;font-weight:700;letter-spacing:-0.1px;left:247.6px;">Name</div>
<div class="t" style="top:842.60px;font-size:13px;color:#666;font-weight:700;letter-spacing:-0.3px;left:509.7px;">Request Count</div>
<div class="t" style="top:842.60px;font-size:13px;color:#666;font-weight:700;letter-spacing:-0.1px;left:771.7px;">Token</div>
<div class="abs" style="left:239px;top:872px;width:787px;height:1px;background:#ebebeb"></div>
<div class="t" style="top:885.70px;font-size:13px;color:#333;left:249.0px;">ali</div>
<div class="t" style="top:885.70px;font-size:13px;color:#333;left:511.09999999999997px;">17</div>
<div class="t" style="top:885.70px;font-size:13px;color:#333;left:773.1px;">19.5K</div>
<div class="t" style="top:842.60px;font-size:13px;color:#666;font-weight:700;letter-spacing:-0.1px;left:1073px;">Name</div>
<div class="t" style="top:842.60px;font-size:13px;color:#666;font-weight:700;letter-spacing:-0.3px;left:1334.7px;">Request Count</div>
<div class="t" style="top:842.60px;font-size:13px;color:#666;font-weight:700;letter-spacing:-0.1px;left:1597px;">Token</div>
<div class="abs" style="left:1064px;top:872px;width:787px;height:1px;background:#ebebeb"></div>
<div class="t" style="top:885.70px;font-size:13px;color:#333;letter-spacing:0.08px;left:1074.4px;">Demo Application</div>
<div class="t" style="top:885.70px;font-size:13px;color:#333;left:1336.1000000000001px;">13</div>
<div class="t" style="top:885.70px;font-size:13px;color:#333;left:1598.4px;">13.8K</div>
<div class="abs" style="left:1064px;top:919px;width:787px;height:1px;background:#ebebeb"></div>
<div class="abs" style="left:1018px;top:834px;width:8px;height:84px;border-radius:0 8px 8px 0;background:linear-gradient(90deg,rgba(0,0,0,0),rgba(0,0,0,0.035))"></div>
<div class="abs" style="left:1843px;top:834px;width:8px;height:86px;border-radius:0 8px 0 0;background:linear-gradient(90deg,rgba(0,0,0,0),rgba(0,0,0,0.035))"></div>
</div>
</main>
</body></html>
